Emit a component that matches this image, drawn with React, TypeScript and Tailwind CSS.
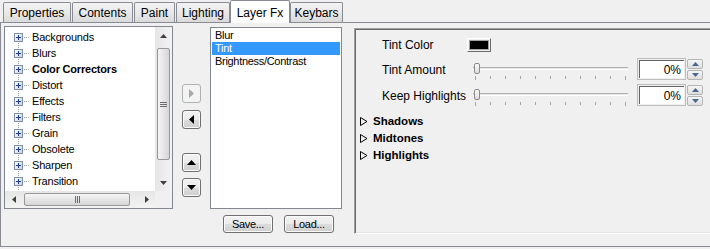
import React from "react";

const tabs = [
	{ label: "Properties", w: "w-[68px]", ml: "ml-0" },
	{ label: "Contents", w: "w-[61px]", ml: "ml-px" },
	{ label: "Paint", w: "w-[41px]", ml: "ml-px" },
	{ label: "Lighting", w: "w-[54px]", ml: "ml-px" },
	{ label: "Layer Fx", w: "w-[60px]", ml: "ml-0", active: true },
	{ label: "Keybars", w: "w-[53px]", ml: "ml-0" },
];

const treeItems = [
	{ name: "Backgrounds" },
	{ name: "Blurs" },
	{ name: "Color Correctors", bold: true },
	{ name: "Distort" },
	{ name: "Effects" },
	{ name: "Filters" },
	{ name: "Grain" },
	{ name: "Obsolete" },
	{ name: "Sharpen" },
	{ name: "Transition" },
];

const fxItems = ["Blur", "Tint", "Brightness/Contrast"];

const btn =
	"rounded-[3px] border border-[#707070] bg-[linear-gradient(#f2f2f2_0%,#ebebeb_50%,#dddddd_51%,#cfcfcf_100%)] shadow-[inset_0_0_0_1px_#fbfbfb]";

const Tri = ({ dir, color, w, h }: { dir: "l" | "r" | "u" | "d"; color: string; w: number; h: number }) => {
	const pts =
		dir === "r"
			? `0,0 ${w},${h / 2} 0,${h}`
			: dir === "l"
				? `${w},0 0,${h / 2} ${w},${h}`
				: dir === "u"
					? `0,${h} ${w / 2},0 ${w},${h}`
					: `0,0 ${w},0 ${w / 2},${h}`;
	return (
		<svg width={w} height={h} viewBox={`0 0 ${w} ${h}`} className="block">
			<polygon points={pts} fill={color} />
		</svg>
	);
};

const PlusBox = () => (
	<svg width="9" height="9" viewBox="0 0 9 9" className="relative block shrink-0">
		<defs>
			<linearGradient id="pb" x1="0" y1="0" x2="1" y2="1">
				<stop offset="0" stopColor="#ffffff" />
				<stop offset="1" stopColor="#c6cdd8" />
			</linearGradient>
		</defs>
		<rect x="0.5" y="0.5" width="8" height="8" fill="url(#pb)" stroke="#7f8fa9" />
		<path d="M2 4.5h5M4.5 2v5" stroke="#1d3a87" strokeWidth="1" />
	</svg>
);

const Grip = ({ vertical }: { vertical?: boolean }) =>
	vertical ? (
		<div className="flex flex-col gap-px">
			<div className="h-px w-[7px] bg-[#6b6b6b]" />
			<div className="h-px w-[7px] bg-[#6b6b6b]" />
			<div className="h-px w-[7px] bg-[#6b6b6b]" />
		</div>
	) : (
		<div className="flex gap-px">
			<div className="h-[7px] w-px bg-[#6b6b6b]" />
			<div className="h-[7px] w-px bg-[#6b6b6b]" />
			<div className="h-[7px] w-px bg-[#6b6b6b]" />
		</div>
	);

const Slider = () => (
	<div className="relative flex h-[22px] w-[156px] flex-col">
		<div className="mt-[9px] h-[3px] w-[155px] border-t border-b border-t-[#b0b0b0] border-b-white bg-[#e7e7e7]" />
		<div className="ml-[2px] mt-[6px] flex w-[151px] items-start justify-between">
			{Array.from({ length: 11 }).map((_, i) => (
				<div key={i} className={`w-px bg-[#a6a6a6] ${i === 0 || i === 10 ? "h-[4px]" : "h-[3px]"}`} />
			))}
		</div>
		<div className="absolute left-px top-[5px] h-[11px] w-[6px] rounded-[2px] border border-[#8c8c8c] bg-[linear-gradient(#fafafa,#dcdcdc)]" />
	</div>
);

const Spin = () => (
	<div className="ml-px flex w-[16px] flex-col gap-px pt-px">
		<div className="flex h-[10px] items-center justify-center rounded-[2px] border border-[#b4b4b4] bg-[linear-gradient(#f6f6f6,#dedede)]">
			<Tri dir="u" color="#4b6592" w={7} h={4} />
		</div>
		<div className="flex h-[10px] items-center justify-center rounded-[2px] border border-[#b4b4b4] bg-[linear-gradient(#f6f6f6,#dedede)]">
			<Tri dir="d" color="#4b6592" w={7} h={4} />
		</div>
	</div>
);

const PercentBox = () => (
	<div className="flex">
		<div className="ml-[8px] h-[22px] w-[49px] border border-[#bdbdbd] p-px">
			<div className="flex h-full items-center justify-end border-t border-l border-[#646464] bg-white pr-[3px] text-[12px] text-black">
				0%
			</div>
		</div>
		<Spin />
	</div>
);

export default function App() {
	return (
		<div className="h-[249px] w-[710px] overflow-hidden bg-[#f0f0f0] font-['Liberation_Sans',Arial,sans-serif] text-black">
			{/* tab strip */}
			<div className="flex h-[22px] items-end pl-[3px]">
				{tabs.map((t) =>
					t.active ? (
						<div
							key={t.label}
							className={`relative z-10 -mb-px flex h-[23px] items-start justify-center rounded-t-[2px] border border-b-0 border-[#898c95] bg-white pt-[3px] text-[12px] ${t.w} ${t.ml}`}>
							{t.label}
						</div>
					) : (
						<div
							key={t.label}
							className={`flex h-[20px] items-center justify-center rounded-t-[2px] border border-b-0 border-[#898c95] bg-[linear-gradient(#f3f3f3,#e9e9e9_50%,#dadada)] pt-px text-[12px] ${t.w} ${t.ml}`}>
							{t.label}
						</div>
					),
				)}
			</div>

			{/* tab page */}
			<div className="flex h-[225px] items-start border-t border-l border-b border-[#898c95]">
				{/* tree */}
				<div className="ml-[3px] mt-[3px] flex h-[183px] w-[169px] flex-col border border-[#828790] bg-white">
					<div className="flex h-[164px]">
						<div className="relative w-[150px] overflow-hidden pt-[2px] text-[11px] tracking-[-0.2px]">
							<div className="absolute left-[13px] top-[10px] bottom-0 w-px bg-[repeating-linear-gradient(to_bottom,#9a9a9a_0_1px,transparent_1px_2px)]" />
							{treeItems.map((it) => (
								<div key={it.name} className="flex h-[16px] items-center pl-[9px]">
									<PlusBox />
									<div className="ml-px h-px w-[6px] bg-[repeating-linear-gradient(to_right,#9a9a9a_0_1px,transparent_1px_2px)]" />
									<span className={`ml-[2px] whitespace-nowrap ${it.bold ? "font-bold" : ""}`}>{it.name}</span>
								</div>
							))}
						</div>
						<div className="flex w-[17px] flex-col bg-[linear-gradient(to_right,#e6e6e6,#f3f3f3)]">
							<div className="flex h-[17px] items-center justify-center">
								<Tri dir="u" color="#404040" w={7} h={4} />
							</div>
							<div className="ml-[2px] mt-[4px] flex h-[112px] w-[13px] items-center justify-center rounded-[2px] border border-[#979797] bg-[linear-gradient(to_right,#f5f5f5,#e6e6e6_50%,#d6d6d6)]">
								<Grip vertical />
							</div>
							<div className="mt-auto flex h-[17px] items-center justify-center">
								<Tri dir="d" color="#404040" w={7} h={4} />
							</div>
						</div>
					</div>
					<div className="flex h-[17px]">
						<div className="flex w-[150px] items-center bg-[linear-gradient(#e6e6e6,#f3f3f3)]">
							<div className="flex w-[17px] justify-center">
								<Tri dir="l" color="#404040" w={4} h={7} />
							</div>
							<div className="ml-[2px] flex h-[13px] w-[106px] items-center justify-center rounded-[2px] border border-[#979797] bg-[linear-gradient(#f5f5f5,#e6e6e6_50%,#d6d6d6)]">
								<Grip />
							</div>
							<div className="ml-auto flex w-[17px] justify-center">
								<Tri dir="r" color="#404040" w={4} h={7} />
							</div>
						</div>
						<div className="w-[17px] bg-[#f0f0f0]" />
					</div>
				</div>

				{/* move buttons */}
				<div className="ml-[9px] mt-[61px] flex w-[19px] flex-col">
					<div className="flex h-[19px] items-center justify-center rounded-[3px] border border-[#adb2b5] bg-[#f4f4f4]">
						<Tri dir="r" color="#a8a8a8" w={5} h={9} />
					</div>
					<div className={`mt-[7px] flex h-[19px] items-center justify-center ${btn}`}>
						<Tri dir="l" color="#000000" w={5} h={9} />
					</div>
					<div className={`mt-[24px] flex h-[19px] items-center justify-center ${btn}`}>
						<Tri dir="u" color="#000000" w={9} h={5} />
					</div>
					<div className={`mt-[6px] flex h-[19px] items-center justify-center ${btn}`}>
						<Tri dir="d" color="#000000" w={9} h={5} />
					</div>
				</div>

				{/* fx list */}
				<div className="ml-[9px] mt-[4px] flex flex-col">
					<div className="h-[182px] w-[132px] border border-[#828790] bg-white px-px pt-px text-[11px] tracking-[-0.3px]">
						{fxItems.map((f) => (
							<div
								key={f}
								className={`flex h-[13px] items-center pl-[3px] ${f === "Tint" ? "bg-[#3399ff] text-white" : ""}`}>
								{f}
							</div>
						))}
					</div>
					<div className="mt-[6px] flex gap-[11px] pl-[13px] text-[11px] tracking-[-0.3px]">
						<div className={`flex h-[18px] w-[50px] items-center justify-center ${btn}`}>Save...</div>
						<div className={`flex h-[18px] w-[50px] items-center justify-center ${btn}`}>Load...</div>
					</div>
				</div>

				{/* settings */}
				<div className="ml-[12px] mt-[5px] h-[206px] flex-1 border-t border-l border-b border-t-[#a0a0a0] border-l-[#a0a0a0] border-b-white pt-[6px] text-[12px] shadow-[inset_1px_1px_0_#696969,inset_0_-1px_0_#e3e3e3]">
					<div className="flex flex-col pl-[27px]">
						<div className="flex h-[20px] items-center">
							<div className="w-[85px]">Tint Color</div>
							<div className="h-[14px] w-[24px] border border-t-white border-l-white border-b-[#696969] border-r-[#696969] p-px">
								<div className="h-full w-full border border-[#a0a0a0] bg-black" />
							</div>
						</div>
						<div className="mt-[3px] flex h-[22px] items-start">
							<div className="flex h-[22px] w-[91px] items-center pt-px">Tint Amount</div>
							<Slider />
							<PercentBox />
						</div>
						<div className="mt-[4px] flex h-[22px] items-start">
							<div className="flex h-[22px] w-[91px] items-center whitespace-nowrap pt-px">Keep Highlights</div>
							<Slider />
							<PercentBox />
						</div>
					</div>
					<div className="mt-[7px] flex flex-col pl-[5px] text-[11.5px] font-bold">
						{["Shadows", "Midtones", "Highlights"].map((s) => (
							<div key={s} className="flex h-[17px] items-center gap-[5px]">
								<svg width="8" height="9" viewBox="0 0 8 9" className="block">
									<polygon points="0.5,0.5 7,4.5 0.5,8.5" fill="none" stroke="#000" strokeWidth="1" />
								</svg>
								<span>{s}</span>
							</div>
						))}
					</div>
				</div>
			</div>
		</div>
	);
}
